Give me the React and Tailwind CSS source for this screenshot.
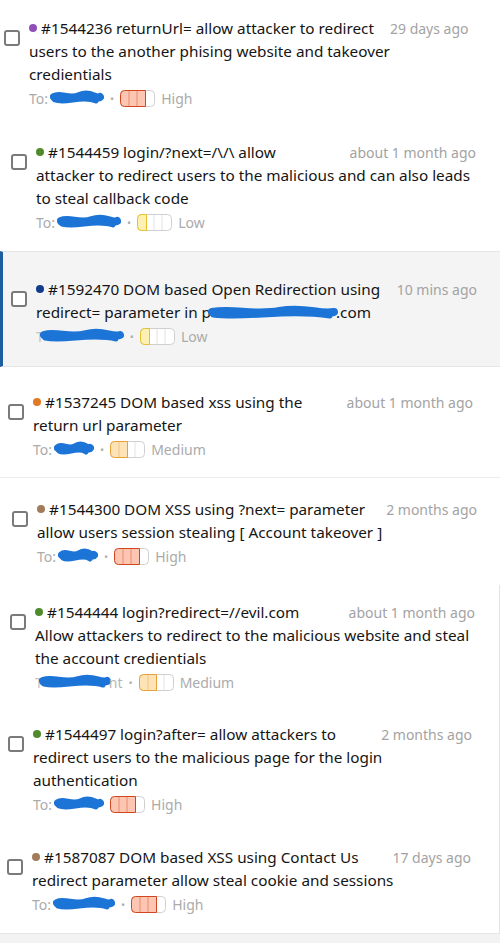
import { Fragment } from 'react'

const SEVERITY = {
  High: { n: 3, fill: '#fcc6b2', stroke: '#d2461d' },
  Medium: { n: 2, fill: '#fde3b8', stroke: '#e8a136' },
  Low: { n: 1, fill: '#fdf0b3', stroke: '#e8c02a' },
}

const items = [
  {
    box: 'h-[128px] pt-[17px] pl-[4px] pr-[32px]',
    dot: 'bg-[#9150b8]',
    lines: ['#1544236 returnUrl= allow attacker to redirect', 'users to the another phising website and takeover', 'credientials'],
    time: '29 days ago',
    to: 54,
    sev: 'High',
  },
  {
    box: 'h-[123px] pt-[13px] pl-[11px] pr-[24px]',
    dot: 'bg-[#4f8a2b]',
    lines: ['#1544459 login/?next=/\\/\\ allow', 'attacker to redirect users to the malicious and can also leads', 'to steal callback code'],
    time: 'about 1 month ago',
    to: 64,
    sev: 'Low',
  },
  {
    box: 'h-[116px] pt-[26px] pl-[8px] pr-[23px] bg-[#f4f4f4] border-l-[3px] border-[#1f5e9e] border-y border-y-[#e6e6e6]',
    dot: 'bg-[#123b8c]',
    lines: ['#1592470 DOM based Open Redirection using', 'redirect'],
    time: '10 mins ago',
    to: 84,
    hideTo: true,
    sev: 'Low',
  },
  {
    box: 'h-[111px] pt-[24px] pl-[8px] pr-[27px] border-b border-[#ececec]',
    dot: 'bg-[#e07a24]',
    lines: ['#1537245 DOM based xss using the', 'return url parameter'],
    time: 'about 1 month ago',
    to: 40,
    sev: 'Medium',
  },
  {
    box: 'h-[107px] pt-[20px] pl-[12px] pr-[23px]',
    dot: 'bg-[#a27b5a]',
    lines: ['#1544300 DOM XSS using ?next= parameter', 'allow users session stealing [ Account takeover ]'],
    time: '2 months ago',
    to: 40,
    sev: 'High',
  },
  {
    box: 'h-[123px] pt-[16px] pl-[10px] pr-[24px] border-r border-[#e4e4e4]',
    dot: 'bg-[#4f8a2b]',
    lines: ['#1544444 login?redirect=//evil.com', 'Allow attackers to redirect to the malicious website and steal', 'the account credientials'],
    time: 'about 1 month ago',
    to: 72,
    hideTo: true,
    tail: 'nt',
    sev: 'Medium',
  },
  {
    box: 'h-[123px] pt-[15px] pl-[8px] pr-[27px] border-r border-[#e4e4e4]',
    dot: 'bg-[#4f8a2b]',
    lines: ['#1544497 login?after= allow attackers to', 'redirect users to the malicious page for the login', 'authentication'],
    time: '2 months ago',
    to: 50,
    noBullet: true,
    sev: 'High',
  },
  {
    box: 'h-[102px] pt-[15px] pl-[7px] pr-[28px] border-r border-[#e4e4e4]',
    dot: 'bg-[#a27b5a]',
    lines: ['#1587087 DOM based XSS using Contact Us', 'redirect parameter allow steal cookie and sessions'],
    time: '17 days ago',
    to: 62,
    sev: 'High',
  },
]

// blue marker scribble used to hide names in the screenshot
function Scribble({ w, h = 16 }) {
  const m = h / 2
  return (
    <svg width={w} height={h} viewBox={`0 0 ${w} ${h}`} className="shrink-0">
      <path
        d={`M4 ${m - 1} C ${w * 0.2} ${m - 5}, ${w * 0.35} ${m + 3}, ${w * 0.55} ${m - 2} S ${w * 0.85} ${m + 2}, ${w - 4} ${m - 1}`}
        stroke="#1b74d6"
        strokeWidth="8"
        strokeLinecap="round"
        fill="none"
      />
      <path
        d={`M5 ${m + 2} C ${w * 0.3} ${m + 6}, ${w * 0.6} ${m - 3}, ${w - 8} ${m + 3}`}
        stroke="#1b74d6"
        strokeWidth="5"
        strokeLinecap="round"
        fill="none"
      />
    </svg>
  )
}

function SeverityBar({ level }) {
  const s = SEVERITY[level]
  const fw = s.n * 8 + 1
  return (
    <svg width="35" height="17" viewBox="0 0 35 17" className="shrink-0">
      <rect x="0.5" y="0.5" width="34" height="16" rx="4" fill="#fff" stroke="#cfcfcf" />
      {[1, 2, 3].map((i) => (
        <line key={i} x1={i * 8 + 1} y1="1" x2={i * 8 + 1} y2="16" stroke="#e2e2e2" />
      ))}
      <path
        d={`M4.5 0.5 H${fw + 0.5} V16.5 H4.5 A4 4 0 0 1 0.5 12.5 V4.5 A4 4 0 0 1 4.5 0.5 Z`}
        fill={s.fill}
        stroke={s.stroke}
      />
      {Array.from({ length: s.n - 1 }).map((_, i) => (
        <line key={i} x1={(i + 1) * 8 + 1} y1="1" x2={(i + 1) * 8 + 1} y2="16" stroke={s.stroke} strokeOpacity="0.45" />
      ))}
    </svg>
  )
}

function Row({ item }) {
  return (
    <div className={`flex items-start ${item.box}`}>
      <div className="mt-[13px] h-[16px] w-[16px] shrink-0 rounded-[3px] border-2 border-[#7a7a7a] bg-white" />
      <div className="ml-[9px] min-w-0 flex-1">
        <div className="flex h-[23px] items-center justify-between">
          <div className="flex items-center whitespace-nowrap">
            <span className={`mr-[4px] h-[8px] w-[8px] -translate-y-[1px] rounded-full ${item.dot}`} />
            <span>{item.lines[0]}</span>
          </div>
          <span className="ml-4 whitespace-nowrap text-[14px] text-[#a3a3a3]">{item.time}</span>
        </div>
        {item.lines[1] === 'redirect' ? (
          <div className="flex h-[23px] items-center whitespace-nowrap">
            <span>redirect= parameter in p</span>
            <span className="-ml-[3px]">
              <Scribble w={130} h={18} />
            </span>
            <span className="-ml-[2px]">.com</span>
          </div>
        ) : (
          item.lines.slice(1).map((l) => (
            <div key={l} className="h-[23px] whitespace-nowrap leading-[23px]">
              {l}
            </div>
          ))
        )}
        <div className="mt-[2px] flex h-5 items-center text-[14px] text-[#ababab]">
          {item.hideTo ? (
            <div className="flex items-center">
              <span className="text-[#c4c4c4]">T</span>
              <span className="-ml-[4px]">
                <Scribble w={item.to} />
              </span>
              {item.tail && <span className="-ml-[2px] text-[#b5b5b5]">{item.tail}</span>}
            </div>
          ) : (
            <Fragment>
              <span>To:</span>
              <span className="ml-[2px]">
                <Scribble w={item.to} />
              </span>
            </Fragment>
          )}
          {!item.noBullet && <span className="ml-[6px] text-[11px] text-[#b0b0b0]">•</span>}
          <span className="ml-[6px]">
            <SeverityBar level={item.sev} />
          </span>
          <span className="ml-[6px]">{item.sev}</span>
        </div>
      </div>
    </div>
  )
}

export default function App() {
  return (
    <div className="h-[945px] w-[500px] overflow-hidden bg-white font-['Segoe_UI','Noto_Sans',sans-serif] text-[15.3px] leading-[23px] text-[#151515]">
      {items.map((item, i) => (
        <Row key={i} item={item} />
      ))}
      <div className="h-[10px] border-t border-[#e6e6e6] bg-[#f3f3f3]" />
    </div>
  )
}
